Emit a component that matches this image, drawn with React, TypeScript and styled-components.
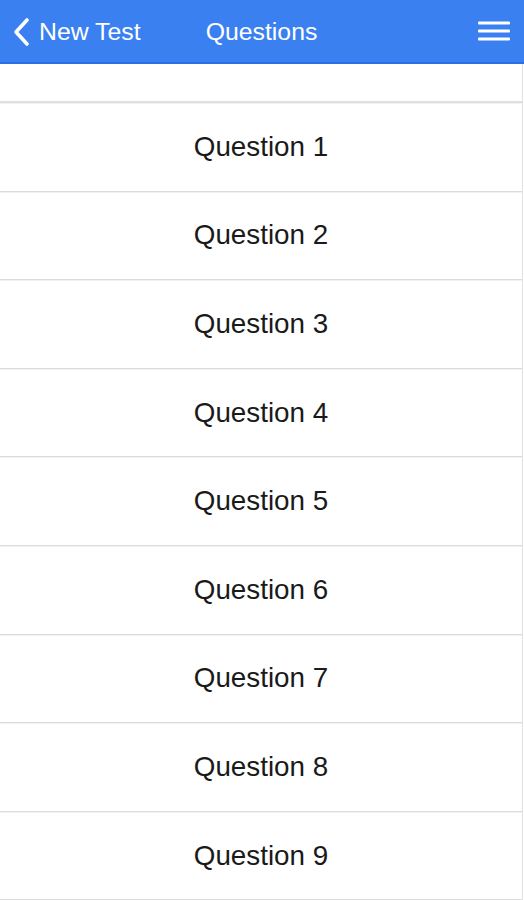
import React from "react";
import styled, { createGlobalStyle } from "styled-components";

const Global = createGlobalStyle`
  html, body { margin: 0; padding: 0; background: #ffffff; }
  body { font-family: "Liberation Sans", Arial, sans-serif; }
  * { box-sizing: border-box; }
`;

const Page = styled.div`
  width: 524px;
  height: 900px;
  overflow: hidden;
  background: #fff;
`;

const Header = styled.header`
  height: 64px;
  background: #3b80f1;
  border-bottom: 2px solid #2a6fe6;
  display: grid;
  grid-template-columns: 1fr auto 1fr;
  align-items: center;
  color: #fff;
  font-size: 24.8px;
`;

const BackButton = styled.div`
  display: flex;
  align-items: center;
  gap: 8px;
  padding-left: 11px;
  padding-top: 1px;
`;

const Title = styled.div`
  padding-top: 1px;
  padding-right: 1px;
`;

const MenuButton = styled.div`
  justify-self: end;
  padding-right: 14px;
  display: flex;
  align-items: center;
`;

const List = styled.div`
  border-right: 1px solid #e2e2e2;
  margin-right: 1px;
`;

const Spacer = styled.div`
  height: 39px;
  border-bottom: 2px solid #e0e0e0;
`;

const Row = styled.div`
  height: 88.6px;
  display: flex;
  align-items: center;
  justify-content: center;
  font-size: 27.8px;
  color: #1a1a1a;
  border-bottom: 1px solid #dcdcdc;
  box-shadow: inset 0 1px 0 #f2f2f2;
`;

const items = Array.from({ length: 9 }, (_, i) => `Question ${i + 1}`);

export default function App() {
  return (
    <Page>
      <Global />
      <Header>
        <BackButton>
          <svg width="20" height="30" viewBox="0 0 20 30" fill="none">
            <path d="M16 3 L5 15 L16 27" stroke="#fff" strokeWidth="3.6" strokeLinecap="round" strokeLinejoin="round" />
          </svg>
          <span>New Test</span>
        </BackButton>
        <Title>Questions</Title>
        <MenuButton>
          <svg width="32" height="24" viewBox="0 0 32 24">
            <rect x="0" y="2.5" width="32" height="3" rx="1" fill="#fff" />
            <rect x="0" y="10.5" width="32" height="3" rx="1" fill="#fff" />
            <rect x="0" y="18.5" width="32" height="3" rx="1" fill="#fff" />
          </svg>
        </MenuButton>
      </Header>
      <List>
        <Spacer />
        {items.map((q) => (
          <Row key={q}>{q}</Row>
        ))}
      </List>
    </Page>
  );
}
